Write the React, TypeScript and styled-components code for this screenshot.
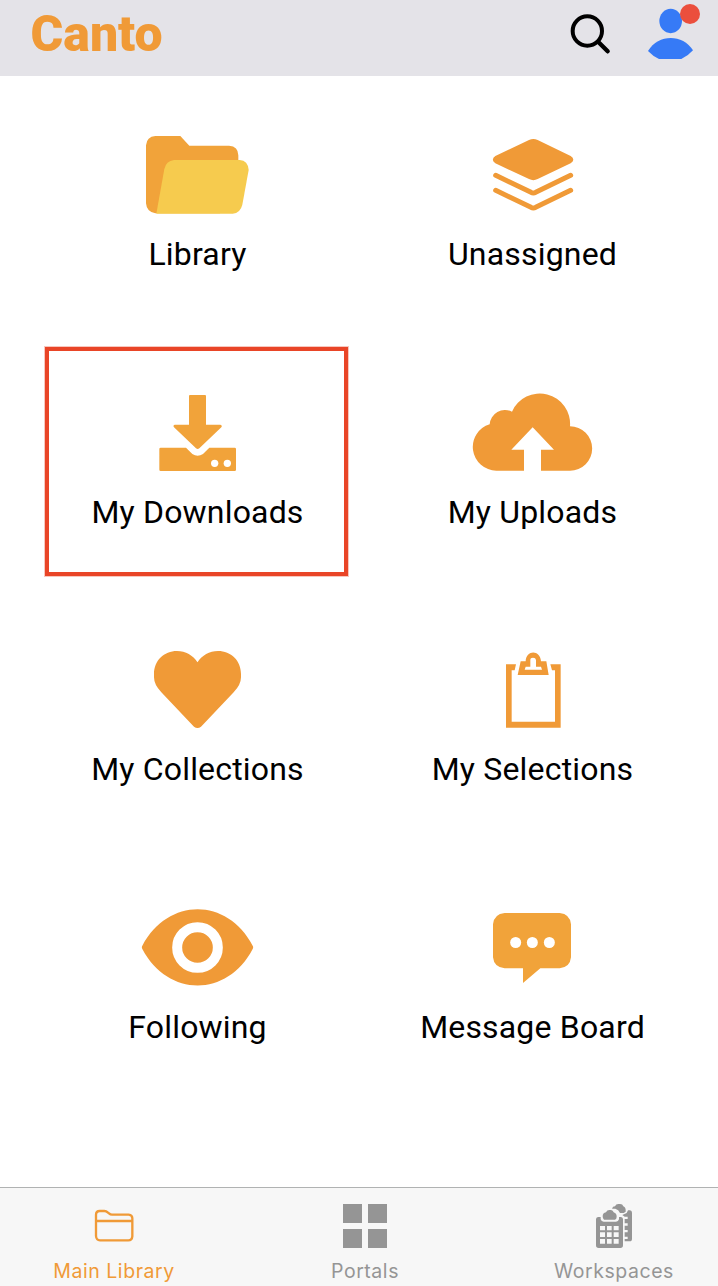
import React from 'react';
import styled, { createGlobalStyle } from 'styled-components';

const ORANGE = '#f09a37';
const AMBER = '#f1a33a';

const GlobalStyle = createGlobalStyle`
  * { box-sizing: border-box; }
  body { margin: 0; background: #fff; }
`;

const Screen = styled.div`
  width: 718px;
  height: 1286px;
  display: flex;
  flex-direction: column;
  overflow: hidden;
  font-family: Roboto, 'Liberation Sans', sans-serif;
`;

const Header = styled.header`
  height: 76px;
  flex: none;
  display: flex;
  align-items: flex-start;
  justify-content: space-between;
  padding: 0 14px 0 30.5px;
  background: #e4e3e8;
`;

const Brand = styled.h1`
  margin: 5px 0 0;
  font-size: 50px;
  line-height: 58px;
  font-weight: 900;
  letter-spacing: 0;
  color: ${ORANGE};
`;

const Actions = styled.div`
  display: flex;
  gap: 30px;
`;

const IconButton = styled.button<{ $size: number; $top?: number }>`
  position: relative;
  width: ${(p) => p.$size}px;
  height: ${(p) => p.$size}px;
  margin: ${(p) => p.$top ?? 0}px 0 0;
  padding: 0;
  border: 0;
  background: none;
  svg { display: block; width: 100%; height: 100%; }
`;

const Badge = styled.span`
  position: absolute;
  top: 4px;
  right: 4px;
  width: 20px;
  height: 20px;
  border-radius: 50%;
  background: #eb4f3d;
`;

const Menu = styled.main`
  flex: 1;
  display: grid;
  grid-template-columns: 335px 335px;
  grid-template-rows: 258px 257px 258px 258px;
  padding: 54px 0 0 30px;
`;

const Tile = styled.div`
  position: relative;
  display: flex;
  flex-direction: column;
  align-items: center;
`;

const TileIcon = styled.svg`
  width: 131px;
  height: 90px;
  flex: none;
`;

const TileLabel = styled.span`
  margin-top: 14px;
  font-size: 32px;
  line-height: 40px;
  letter-spacing: 0.18px;
  white-space: nowrap;
  color: #000;
`;

const Highlight = styled.div`
  position: absolute;
  top: -41px;
  left: 15px;
  width: 303px;
  height: 229px;
  border: 4px solid #e94527;
  box-shadow: 0 0 0 1px rgba(233, 69, 39, 0.3);
`;

const TabBar = styled.nav`
  height: 99px;
  flex: none;
  display: grid;
  grid-template-columns: 228px 274px 224px;
  border-top: 1px solid #b0b2b2;
  background: #f7f7f7;
`;

const Tab = styled.div<{ $active?: boolean }>`
  display: flex;
  flex-direction: column;
  align-items: center;
  padding-top: 14px;
  color: ${(p) => (p.$active ? ORANGE : '#959595')};
  svg { width: 48px; height: 48px; flex: none; }
`;

const TabLabel = styled.span`
  margin-top: 9px;
  font-family: Inter, 'Liberation Sans', sans-serif;
  font-size: 19.5px;
  line-height: 24px;
  letter-spacing: 0.55px;
  white-space: nowrap;
`;

const tiles = [
  {
    label: 'Library',
    box: '36 30',
    art: (
      <>
        <path fill={AMBER} d="M106 48H181L208 77H327Q355 79 355 106V200L300 280H106Q80 276 78 250V76Q80 50 106 48Z" />
        <path fill="#f6cb4e" d="M162 120H359Q384 122 386 150L367 254Q361 279 338 281H109L133 147Q138 123 162 120Z" />
      </>
    ),
  },
  {
    label: 'Unassigned',
    box: '81 30',
    art: (
      <>
        <path fill={ORANGE} d="M267 60Q280 54 293 60L392 108Q408 119 392 130L293 177Q280 184 267 177L166 130Q151 119 166 108Z" />
        <path fill="none" stroke={ORANGE} strokeWidth="15" strokeLinecap="round" strokeLinejoin="round" d="M167 166L273 217Q280 221 287 217L392 166M167 211L273 262Q280 266 287 262L392 211" />
      </>
    ),
  },
  {
    label: 'My Downloads',
    box: '306 144',
    marked: true,
    art: (
      <>
        <path fill={AMBER} d="M480 165H525Q528 165 528 168V254H571Q578 256 574 262L508 325Q503 329 498 325L432 262Q428 256 434 254H477V168Q477 165 480 165Z" />
        <path fill={AMBER} d="M392 323H468L487 342Q503 353 519 342L538 323H614Q618 323 618 327V389Q618 393 614 393H392Q388 393 388 389V327Q388 323 392 323Z" />
        <circle cx="554" cy="370" r="11" fill="#fff" />
        <circle cx="592" cy="370" r="11" fill="#fff" />
      </>
    ),
  },
  {
    label: 'My Uploads',
    box: '81 24',
    art: (
      <path fill={ORANGE} d="M169 272A71 71 0 0 1 149 133A46 46 0 0 1 216 95A91 91 0 0 1 390 139A66.500 66.500 0 0 1 390 272H303V209H342L278 142L214 209H252V272Z" />
    ),
  },
  {
    label: 'My Collections',
    box: '156 15',
    art: (
      <path fill={ORANGE} d="M352.500 67C366 46 388 33 414 33C453 33 483 62 483 102V112Q483 134 461 157L363 260Q352.500 268 342 260L244 157Q222 134 222 112V102C222 62 252 33 291 33C317 33 339 46 352.500 67Z" />
    ),
  },
  {
    label: 'My Selections',
    box: '141 15',
    art: (
      <>
        <path fill={ORANGE} d="M258 73H288L284 91H275V245H405V91H396L391 73H422V263H258Z" />
        <path fill={ORANGE} fillRule="evenodd" d="M302 64H317C318 29 361 29 363 64H379L386 105H293ZM317 80L314 89H366L363 80H348V60Q347 53 339 53Q331 53 331 60V80Z" />
      </>
    ),
  },
  {
    label: 'Following',
    box: '66 24',
    art: (
      <>
        <path fill={ORANGE} d="M97 152C174 6 352 6 428 152Q431 157 428 162C352 308 174 308 97 162Q94 157 97 152Z" />
        <circle cx="262.5" cy="157.5" r="61" fill="none" stroke="#fff" strokeWidth="30" />
      </>
    ),
  },
  {
    label: 'Message Board',
    box: '171 24',
    art: (
      <>
        <path fill={AMBER} d="M284 54H449Q480 57 483 88V187Q480 217 449 220H391L339 264V220H284Q252 217 249 187V88Q252 57 284 54Z" />
        <circle cx="317" cy="142.500" r="16.500" fill="#fff" />
        <circle cx="367" cy="142.500" r="16.500" fill="#fff" />
        <circle cx="418" cy="142.500" r="16.500" fill="#fff" />
      </>
    ),
  },
];

const SearchIcon = () => (
  <svg viewBox="78 30 144 144" fill="none" stroke="#000" strokeLinecap="round">
    <circle cx="142" cy="93" r="44" strokeWidth="12" />
    <path strokeWidth="13" d="M175 126L203 154" />
  </svg>
);

const UserIcon = () => (
  <svg viewBox="312 0 180 180" fill="#367af6">
    <ellipse cx="392" cy="63" rx="34" ry="36.500" />
    <path d="M324 153C355 101 428 101 459 151Q444 168 424 177H357Q339 169 324 153Z" />
  </svg>
);

const FolderIcon = () => (
  <svg viewBox="270 78 144 144" fill="none" stroke="currentColor" strokeWidth="7">
    <path d="M288 180V116Q288 105 299 105H313Q319 105 323 109L328 113Q331 116 336 116H386Q397 117 397 127V181Q396 193 385 193H300Q289 193 288 180ZM288 135H397" />
  </svg>
);

const PortalsIcon = () => (
  <svg viewBox="341 1202 48 48" fill="currentColor">
    <path d="M343 1204h19v19h-19zM368 1204h19v19h-19zM343 1229h19v19h-19zM368 1229h19v19h-19z" />
  </svg>
);

const WorkspacesIcon = () => (
  <svg viewBox="150 78 144 144" fill="currentColor">
    <path d="M216 98Q218 91 225 91Q228 84 235 84H240Q248 84 250 91Q258 94 257 107L251 111H240Q236 101 226 98Z" />
    <path d="M247 117L260 111L264 103H270Q276 104 276 110V188Q276 196 269 196H254V189H263V182H254V169H263V162H254V149H263V142H254V129H263V122H254Z" />
    <path fillRule="evenodd" d="M174 123H182V130Q184 137 191 137H228Q235 137 237 130V123H243Q249 124 249 130V208Q249 216 241 216H176Q168 216 168 208V130Q168 124 174 123ZM180 150V163H195V150ZM201 150V163H215V150ZM221 150V163H236V150ZM180 169V183H195V169ZM201 169V183H215V169ZM221 169V183H236V169ZM180 189V203H195V189ZM201 189V203H215V189ZM221 189V203H236V189Z" />
    <path d="M192 131Q188 129 188 121Q188 111 198 109Q201 102 208 102H213Q219 103 221 109Q230 112 230 122Q230 129 225 131Z" />
  </svg>
);

export default function App() {
  return (
    <>
      <GlobalStyle />
      <Screen>
        <Header>
          <Brand>Canto</Brand>
          <Actions>
            <IconButton $size={48} $top={10} aria-label="Search">
              <SearchIcon />
            </IconButton>
            <IconButton $size={60} aria-label="Account">
              <UserIcon />
              <Badge />
            </IconButton>
          </Actions>
        </Header>
        <Menu>
          {tiles.map((t) => (
            <Tile key={t.label}>
              <TileIcon viewBox={`${t.box} 393 270`}>{t.art}</TileIcon>
              <TileLabel>{t.label}</TileLabel>
              {t.marked && <Highlight />}
            </Tile>
          ))}
        </Menu>
        <TabBar>
          <Tab $active>
            <FolderIcon />
            <TabLabel>Main Library</TabLabel>
          </Tab>
          <Tab>
            <PortalsIcon />
            <TabLabel>Portals</TabLabel>
          </Tab>
          <Tab>
            <WorkspacesIcon />
            <TabLabel>Workspaces</TabLabel>
          </Tab>
        </TabBar>
      </Screen>
    </>
  );
}
